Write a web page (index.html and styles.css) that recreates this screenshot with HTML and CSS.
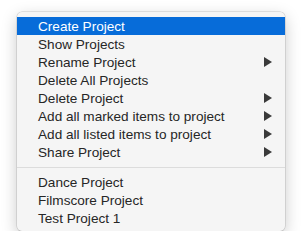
FILE: index.html
```html
<!DOCTYPE html>
<html>
<head>
<meta charset="utf-8">
<link rel="stylesheet" href="styles.css">
</head>
<body>
<div class="menu">
  <div class="item active">Create Project</div>
  <div class="item">Show Projects</div>
  <div class="item sub">Rename Project<span class="arrow"></span></div>
  <div class="item">Delete All Projects</div>
  <div class="item sub">Delete Project<span class="arrow"></span></div>
  <div class="item sub">Add all marked items to project<span class="arrow"></span></div>
  <div class="item sub">Add all listed items to project<span class="arrow"></span></div>
  <div class="item sub">Share Project<span class="arrow"></span></div>
  <div class="sep"></div>
  <div class="item">Dance Project</div>
  <div class="item">Filmscore Project</div>
  <div class="item">Test Project 1</div>
</div>
</body>
</html>
```
FILE: styles.css
```css
html, body {
  margin: 0;
  padding: 0;
  background: #ffffff;
}
body {
  padding: 12px 0 0 17px;
}
.menu {
  width: 268px;
  box-sizing: border-box;
  padding: 5px 0 4px;
  background: #f5f5f5;
  border-radius: 5px;
  box-shadow: 0 0 0 0.5px rgba(0,0,0,0.18), 0 5px 16px rgba(0,0,0,0.22);
  font-family: "Liberation Sans", Arial, sans-serif;
  font-size: 13.6px;
  color: #262626;
}
.item {
  height: 18px;
  line-height: 17px;
  padding: 0 13px 0 21px;
  display: flex;
  align-items: center;
  justify-content: space-between;
}
.item.active {
  background: #076cd9;
  color: #ffffff;
}
.arrow {
  width: 0;
  height: 0;
  border-top: 5px solid transparent;
  border-bottom: 5px solid transparent;
  border-left: 8px solid #3a3a3a;
}
.sep {
  height: 1px;
  margin: 6px 0 5px;
  background: #dcdcdc;
}
```
